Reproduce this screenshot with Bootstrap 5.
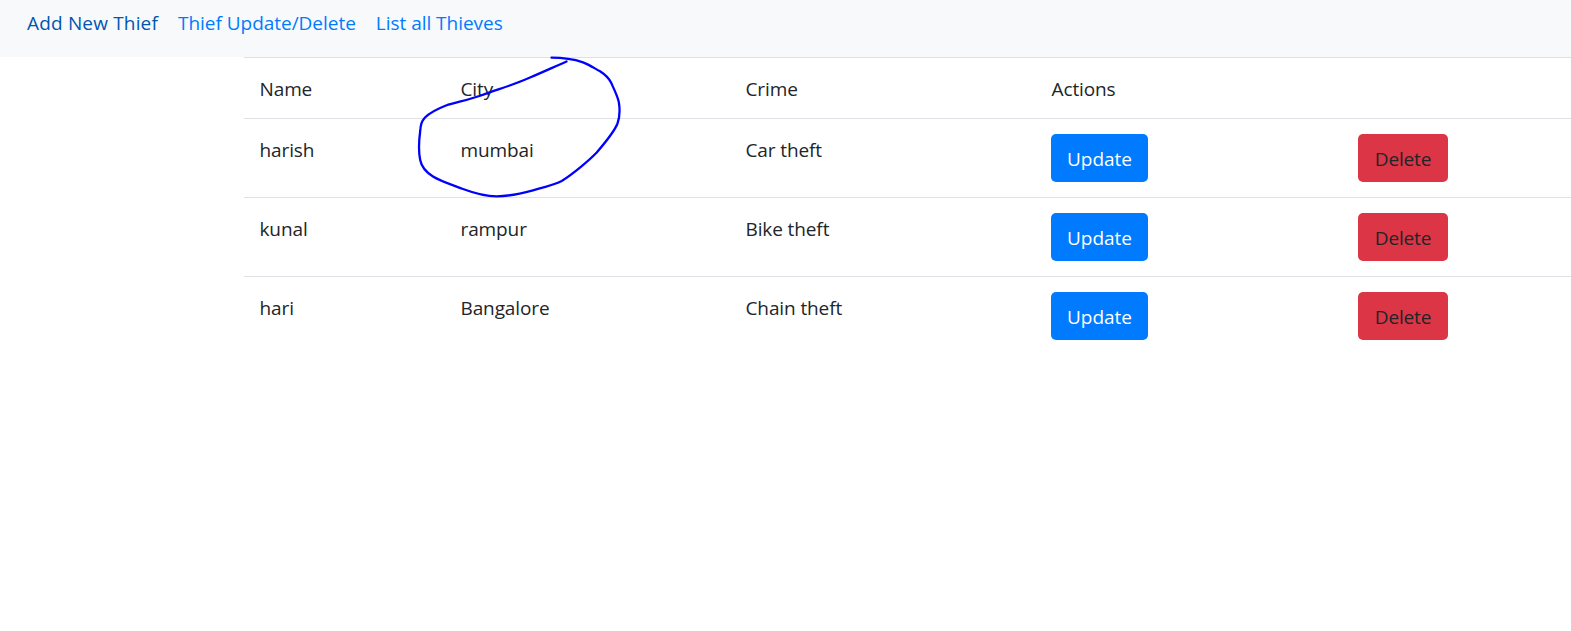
<!DOCTYPE html>
<html lang="en">
<head>
<meta charset="utf-8">
<meta name="viewport" content="width=device-width, initial-scale=1">
<title>Thieves</title>
<link href="https://cdn.jsdelivr.net/npm/bootstrap@5.3.0/dist/css/bootstrap.min.css" rel="stylesheet">
<style>
body { font-family: "Open Sans", "Noto Sans", sans-serif; font-size: 19px; line-height: 30px; color: #212529; }
.topbar { height: 57px; padding: 8px 10px; background: #f8f9fa; }
.topbar .nav-link { color: #007bff; padding: 0; margin-left: 17px; margin-right: 3px; line-height: 30px; letter-spacing: -.03px; }
.topbar .nav-link.current { color: #0056b3; letter-spacing: .17px; }
.list-area { margin-left: 244px; }
.thieves { table-layout: fixed; margin: 0; color: #212529; }
.thieves > tbody > tr > td { padding: 16px 15px 14px 15.5px; border-top: 1px solid #dee2e6; border-bottom: 0; color: #212529; line-height: 30px; letter-spacing: -.11px; }
.thieves > tbody > tr > td.action { padding: 15px; letter-spacing: 0; }
.thieves .btn { height: 48px; padding: 1px 0 0; border: 0; border-radius: 5px; font-size: 19px; line-height: 30px; display: block; }
.btn-update, .btn-update:hover { width: 97px; background: #007bff; color: #fff; }
.btn-delete, .btn-delete:hover { width: 90px; background: #dc3545; color: #212529; letter-spacing: -.15px; }
.ink { left: 410px; top: 50px; pointer-events: none; }
</style>
</head>
<body class="bg-white overflow-hidden">
<nav class="topbar d-flex">
  <a class="nav-link current" href="#">Add New Thief</a>
  <a class="nav-link" href="#">Thief Update/Delete</a>
  <a class="nav-link" href="#">List all Thieves</a>
</nav>
<main class="list-area">
  <table class="table thieves">
    <colgroup><col style="width:201px"><col style="width:285px"><col style="width:306px"><col style="width:307px"><col></colgroup>
    <tbody>
      <tr><td>Name</td><td>City</td><td>Crime</td><td>Actions</td><td></td></tr>
      <tr><td>harish</td><td>mumbai</td><td>Car theft</td><td class="action"><button class="btn btn-update">Update</button></td><td class="action"><button class="btn btn-delete">Delete</button></td></tr>
      <tr><td>kunal</td><td>rampur</td><td>Bike theft</td><td class="action"><button class="btn btn-update">Update</button></td><td class="action"><button class="btn btn-delete">Delete</button></td></tr>
      <tr><td>hari</td><td>Bangalore</td><td>Chain theft</td><td class="action"><button class="btn btn-update">Update</button></td><td class="action"><button class="btn btn-delete">Delete</button></td></tr>
    </tbody>
  </table>
</main>
<!-- hand-drawn loop around the city -->
<svg class="ink position-absolute" width="220" height="155" viewBox="410 50 220 155" fill="none" stroke="#00f" stroke-width="2.3" stroke-linecap="round" stroke-linejoin="round">
  <path d="M551.5 57.7C562 57.7 573 59 583 62.3C589 64.5 594 68 600 71.3C605 74.500 609 78.500 611 82.500C614 89 617.500 96 618.800 102C619.800 108 619.800 117 617.500 123.500C615 130 607 140.500 596.700 152.500C589 160.500 573 174 561.700 181C554 185 543 187.500 533 190.300C521 193.500 508 196.300 496.700 196.300C485 196.300 475 193.500 463 189C452 184.800 440 181 433 176.500C425 171.500 421.500 167 420.200 160C418.500 152 419 140 420.200 131C420.800 124 421.500 121.500 425 117.500C430 112.500 437 109 446 105.500C455 102.500 468 100 481 95.500C500 88.500 512 85.500 530 77.500C543 72 556 66 566.500 61.500"/>
</svg>
<script src="https://cdn.jsdelivr.net/npm/bootstrap@5.3.0/dist/js/bootstrap.bundle.min.js"></script>
</body>
</html>
